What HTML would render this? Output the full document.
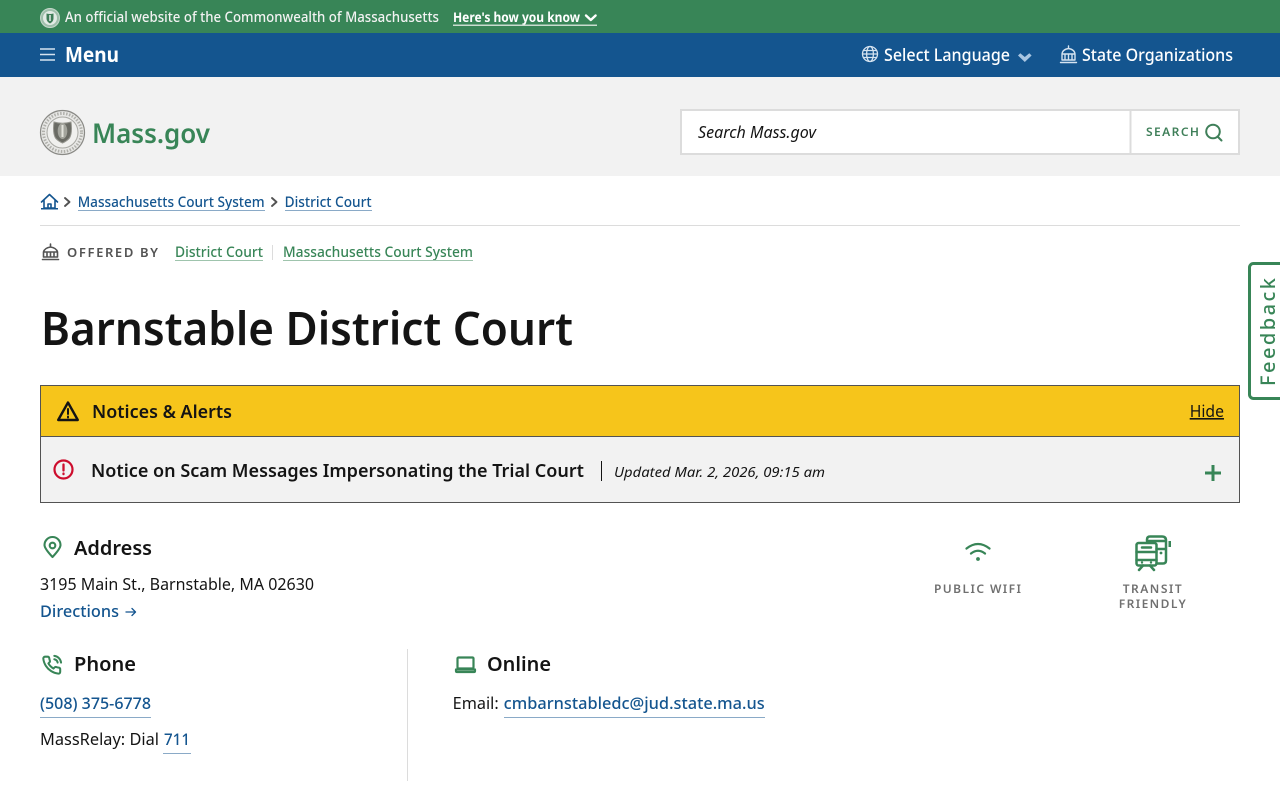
<!DOCTYPE html>
<html lang="en"><head><meta charset="utf-8"><title>Barnstable District Court | Mass.gov</title>
<style>
html,body{margin:0;padding:0;background:#fff;width:1280px;height:800px;overflow:hidden}
svg{display:block}
text{font-family:"Noto Sans","Open Sans","Liberation Sans",sans-serif;white-space:pre}
.l{fill:#14558f}.g{fill:#388557}.k{fill:#141414}
.s{fill:none;stroke-linecap:round;stroke-linejoin:round}
</style></head><body>
<svg width="1280" height="800" viewBox="0 0 1280 800" xmlns="http://www.w3.org/2000/svg">
<rect width="1280" height="33" fill="#388557"/>
<rect y="33" width="1280" height="44" fill="#14558f"/>
<rect y="77" width="1280" height="99" fill="#f2f2f2"/>

<circle cx="50" cy="18" r="9.500" fill="#9fbfab" stroke="#c5d8cb"/>
<circle cx="50" cy="18" r="7" fill="#e3ebe5"/>
<path d="M46.500 13.500q3.500 1 7 0v5q0 3-3.500 5q-3.500-2-3.500-5z" fill="#3f7d58"/>
<path d="M50 15v6" stroke="#e3ebe5" stroke-width="1.500"/>
<text x="65" y="22" font-size="14" font-weight="500" fill="#f2f2f2" textLength="374" lengthAdjust="spacingAndGlyphs">An official website of the Commonwealth of Massachusetts</text>
<text x="453" y="22" font-size="13.500" font-weight="700" fill="#fff" textLength="127" lengthAdjust="spacingAndGlyphs">Here's how you know</text>
<path d="M586 15.500l4.800 4.500 4.800-4.500" class="s" stroke="#fff" stroke-width="2.400"/>
<rect x="453" y="24.500" width="144" height="1.500" fill="#c9dccf"/>

<path d="M40 49h15M40 54.500h15M40 60h15" stroke="#d5e3f0" stroke-width="1.500" fill="none"/>
<text x="65" y="62" font-size="20.500" font-weight="700" fill="#fff" textLength="54" lengthAdjust="spacingAndGlyphs">Menu</text>
<g class="s" stroke="#d5e3f0" stroke-width="1.300"><circle cx="870" cy="54" r="7.500"/><ellipse cx="870" cy="54" rx="3.400" ry="7.500"/><path d="M862.500 54h15M863.500 50.500h13M863.500 57.500h13"/></g>
<text x="884" y="61" font-size="17" fill="#fff" font-weight="550" textLength="126" lengthAdjust="spacingAndGlyphs">Select Language</text>
<path d="M1018 55.500l2.300-2.300 4.500 3.800 4.500-3.800 2.300 2.300-6.800 6.500z" fill="#a9c6e2"/>
<g class="s" stroke="#d5e3f0" stroke-width="1.400"><path d="M1060.500 62.500h16M1062 60h13v-6h-13zM1062 54q.5-4.500 6.500-5.500q6 1 6.500 5.500M1068.500 48.500v-2.500M1065 54v6M1068.500 54v6M1072 54v6"/></g>
<text x="1082" y="61" font-size="17" fill="#fff" font-weight="550" textLength="151" lengthAdjust="spacingAndGlyphs">State Organizations</text>

<circle cx="62.500" cy="132.500" r="22" fill="#e8e8e6" stroke="#8a8a86" stroke-width="1.200"/>
<circle cx="62.500" cy="132.500" r="15.500" fill="#f0f0ee" stroke="#a8a8a3" stroke-width="1"/>
<circle cx="62.500" cy="132.500" r="19" fill="none" stroke="#b0b0ab" stroke-width="3" stroke-dasharray="1.500 1.500"/>
<path d="M54 122q8.500 2.500 17 0q1.500 11-1.500 16q-2.500 3-7 5q-4.500-2-7-5q-3-5-1.500-16z" fill="#6a6b64" stroke="#96968f"/>
<ellipse cx="62.500" cy="131" rx="4.800" ry="8" fill="#a3a49c"/>
<path d="M62.500 125v12" stroke="#e3e3dc" stroke-width="2"/>
<text x="92" y="143" font-size="27" font-weight="600" class="g" textLength="118" lengthAdjust="spacingAndGlyphs">Mass.gov</text>

<rect x="681" y="110" width="558" height="44" fill="#fff" stroke="#dcdcdc" stroke-width="2"/>
<rect x="1129.500" y="110" width="2" height="44" fill="#dcdcdc"/>
<text x="698" y="138" font-size="16" font-style="italic" fill="#141414" textLength="118" lengthAdjust="spacingAndGlyphs">Search Mass.gov</text>
<text x="1146" y="136" font-size="12" font-weight="600" fill="#3f7f59" textLength="53" lengthAdjust="spacing">SEARCH</text>
<g class="s" stroke="#3f7f59" stroke-width="2"><circle cx="1213" cy="131.500" r="6.800"/><path d="M1217.500 136.500l4 4"/></g>

<g class="s" stroke="#14558f" stroke-width="1.600"><path d="M41.500 202l8-7.500 8 7.500M44 200.500v7.500h11v-7.500M48 208v-4h3v4"/></g>
<rect x="41" y="208" width="17" height="1.500" fill="#14558f"/>
<path d="M65 198l4.500 4-4.500 4" class="s" stroke="#535353" stroke-width="1.900"/>
<text x="77.700" y="207" font-size="14" font-weight="500" class="l" textLength="187" lengthAdjust="spacingAndGlyphs">Massachusetts Court System</text>
<rect x="78" y="210" width="187" height="1" fill="#8aaac7"/>
<path d="M272 198l4.500 4-4.500 4" class="s" stroke="#535353" stroke-width="1.900"/>
<text x="284.600" y="207" font-size="14" font-weight="500" class="l" textLength="87" lengthAdjust="spacingAndGlyphs">District Court</text>
<rect x="285" y="210" width="87" height="1" fill="#8aaac7"/>
<rect x="40" y="225" width="1200" height="1" fill="#dcdcdc"/>

<g class="s" stroke="#535353" stroke-width="1.600"><path d="M42.500 259.500h16M43.500 257v-5h14v5zM43.500 252q1-4 7-5q6 1 7 5M50.500 247v-3M47 252v5M50.500 252v5M54 252v5"/></g>
<text x="67" y="257" font-size="13" font-weight="600" fill="#535353" textLength="91" lengthAdjust="spacing">OFFERED BY</text>
<text x="175" y="257" font-size="14" font-weight="500" class="g" textLength="88" lengthAdjust="spacingAndGlyphs">District Court</text>
<rect x="175" y="260" width="88" height="1" fill="#9fc4ad"/>
<rect x="272" y="245" width="1" height="15" fill="#dcdcdc"/>
<text x="283" y="257" font-size="14" font-weight="500" class="g" textLength="190" lengthAdjust="spacingAndGlyphs">Massachusetts Court System</text>
<rect x="283" y="260" width="190" height="1" fill="#9fc4ad"/>

<text x="41" y="345" font-size="46" font-weight="600" class="k" textLength="532" lengthAdjust="spacingAndGlyphs">Barnstable District Court</text>

<rect x="1249.500" y="263.500" width="40" height="135" rx="4" fill="#fff" stroke="#388557" stroke-width="3"/>
<text transform="translate(1275 386) rotate(-90)" font-size="20" font-weight="500" class="g" textLength="108" lengthAdjust="spacing">Feedback</text>

<rect x="40.500" y="385.500" width="1199" height="117" fill="#f2f2f2" stroke="#535353"/>
<rect x="41" y="386" width="1198" height="50" fill="#f6c51b"/>
<rect x="41" y="436" width="1198" height="1" fill="#535353"/>
<path d="M68 402.500l9.800 17.500h-19.600z" class="s" stroke="#141414" stroke-width="2.400"/>
<path d="M68 409v5M68 416.500v1" class="s" stroke="#141414" stroke-width="2"/>
<text x="92" y="418" font-size="18" font-weight="600" class="k" textLength="140" lengthAdjust="spacingAndGlyphs">Notices &amp; Alerts</text>
<text x="1189.700" y="417" font-size="16" class="k" textLength="34.300" lengthAdjust="spacingAndGlyphs" text-decoration="underline">Hide</text>
<circle cx="63.500" cy="469.500" r="9" fill="none" stroke="#cd0d2d" stroke-width="2.200"/>
<path d="M63.500 464.500v6M63.500 473.500v.6" class="s" stroke="#cd0d2d" stroke-width="2.300"/>
<text x="91" y="477" font-size="18" font-weight="600" class="k" textLength="493" lengthAdjust="spacingAndGlyphs">Notice on Scam Messages Impersonating the Trial Court</text>
<rect x="601" y="461" width="1" height="20" fill="#141414"/>
<text x="614" y="477" font-size="14" font-style="italic" class="k" textLength="211" lengthAdjust="spacingAndGlyphs">Updated Mar. 2, 2026, 09:15 am</text>
<path d="M1205 473h16M1213 465v16" fill="none" stroke="#388557" stroke-width="3"/>

<g class="s" stroke="#388557" stroke-width="2.100"><path d="M52.500 557q-8-8.500-8-12a8 8 0 0 1 16 0q0 3.500-8 12z"/><circle cx="52.500" cy="545.500" r="2.800"/></g>
<text x="74" y="555" font-size="20" font-weight="600" class="k" textLength="78" lengthAdjust="spacingAndGlyphs">Address</text>
<text x="40" y="590" font-size="16" fill="#141414" textLength="274" lengthAdjust="spacingAndGlyphs">3195 Main St., Barnstable, MA 02630</text>
<text x="40" y="617" font-size="16" font-weight="550" class="l" textLength="79" lengthAdjust="spacingAndGlyphs">Directions</text>
<path d="M126 612h9M132 608.500l3.500 3.500-3.500 3.500" class="s" stroke="#14558f" stroke-width="1.300"/>

<g class="s" stroke="#388557" stroke-width="2.300"><path d="M966.500 548.500q11.500-9 23 0"/><path d="M971 553.500q7-5.500 14 0"/></g>
<circle cx="978" cy="559" r="1.900" fill="#388557"/>
<text x="934" y="593" font-size="12" font-weight="600" fill="#707070" textLength="87" lengthAdjust="spacing">PUBLIC WIFI</text>
<g class="s" stroke="#388557" stroke-width="2.500"><rect x="1136.500" y="543" width="20" height="22.500" rx="2"/><path d="M1136.500 552h20M1136.500 560h20M1142 547.500h9M1139 570l4-4.500M1154 570l-4-4.500M1147 540.500v-1q0-3 3-3h12q4 0 4 4v20q0 3-3 3h-6.500M1147 541h19M1156.500 549h9.500"/></g>
<rect x="1168.500" y="541" width="2.500" height="6" fill="#388557"/>
<circle cx="1142" cy="562.500" r="1.200" fill="#388557"/><circle cx="1151" cy="562.500" r="1.200" fill="#388557"/><circle cx="1161" cy="553" r="1.400" fill="#388557"/>
<text x="1122.700" y="593" font-size="12" font-weight="600" fill="#707070" textLength="59" lengthAdjust="spacing">TRANSIT</text>
<text x="1118.700" y="608" font-size="12" font-weight="600" fill="#707070" textLength="67" lengthAdjust="spacing">FRIENDLY</text>

<g transform="translate(41.500 655) scale(.85)" class="s" stroke="#388557" stroke-width="2.400"><path d="M22 16.920v3a2 2 0 0 1-2.180 2 19.790 19.790 0 0 1-8.630-3.070 19.500 19.500 0 0 1-6-6 19.790 19.790 0 0 1-3.070-8.670A2 2 0 0 1 4.110 2h3a2 2 0 0 1 2 1.720 12.840 12.840 0 0 0 .7 2.810 2 2 0 0 1-.45 2.110L8.090 9.910a16 16 0 0 0 6 6l1.270-1.270a2 2 0 0 1 2.110-.45 12.840 12.840 0 0 0 2.810.7A2 2 0 0 1 22 16.920z"/><path d="M15.050 5A5 5 0 0 1 19 8.950M15.050 1A9 9 0 0 1 23 8.940"/></g>
<text x="74" y="671" font-size="20" font-weight="600" class="k" textLength="62" lengthAdjust="spacingAndGlyphs">Phone</text>
<text x="40" y="709" font-size="16" font-weight="550" class="l" textLength="111" lengthAdjust="spacingAndGlyphs">(508) 375-6778</text>
<rect x="40" y="717" width="111" height="1" fill="#8aaac7"/>
<text x="40" y="745" font-size="16" fill="#141414" textLength="119" lengthAdjust="spacingAndGlyphs">MassRelay: Dial</text>
<text x="164" y="745" font-size="16" font-weight="550" class="l" textLength="26" lengthAdjust="spacingAndGlyphs">711</text>
<rect x="163" y="753" width="28" height="1" fill="#8aaac7"/>

<rect x="407" y="649" width="1" height="132" fill="#dcdcdc"/>
<g class="s" stroke="#388557" stroke-width="2.200"><rect x="457.500" y="657.500" width="16" height="11" rx="1"/><path d="M456 669.500v1.500q0 1 1 1h17q1 0 1-1v-1.500z"/></g>
<text x="487" y="671" font-size="20" font-weight="600" class="k" textLength="64" lengthAdjust="spacingAndGlyphs">Online</text>
<text x="452.700" y="709" font-size="16" fill="#141414" textLength="46" lengthAdjust="spacingAndGlyphs">Email:</text>
<text x="503.700" y="709" font-size="16" font-weight="550" class="l" textLength="261" lengthAdjust="spacingAndGlyphs">cmbarnstabledc@jud.state.ma.us</text>
<rect x="504" y="717" width="261" height="1" fill="#8aaac7"/>
</svg>
</body></html>
